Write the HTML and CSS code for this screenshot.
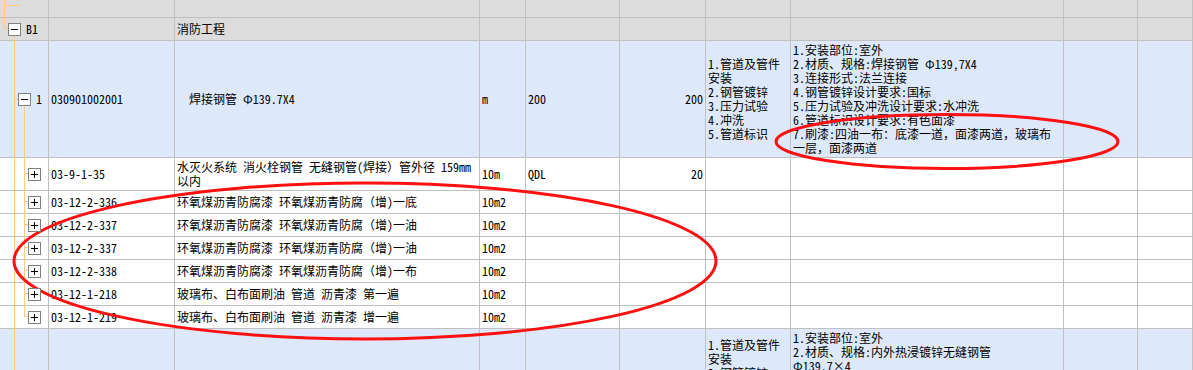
FILE: index.html
```html
<!DOCTYPE html>
<html>

<head lang="zh">
    <meta charset="UTF-8">
    <title>清单</title>
    <link rel="stylesheet" href="styles.css">
</head>

<body>
    <div class="sheet">
        <div class="row row-top">
            <div class="c"></div><div class="c"></div><div class="c"></div><div class="c"></div><div class="c"></div>
            <div class="c"></div><div class="c"></div><div class="c"></div><div class="c"></div><div class="c"></div>
        </div>

        <div class="row row-group">
            <div class="c tree lv0"><span class="tog"><svg width="11" height="11"><path d="M2 5.5h7" /></svg></span><span class="lab">B1</span></div>
            <div class="c"></div>
            <div class="c">消防工程</div>
            <div class="c"></div><div class="c"></div><div class="c"></div><div class="c"></div><div class="c"></div><div class="c"></div><div class="c"></div>
        </div>

        <div class="row row-item">
            <div class="c tree lv1"><span class="tog"><svg width="11" height="11"><path d="M2 5.5h7" /></svg></span><span class="lab">1</span></div>
            <div class="c">030901002001</div>
            <div class="c indent">焊接钢管 Φ139.7X4</div>
            <div class="c">m</div>
            <div class="c">200</div>
            <div class="c num">200</div>
            <div class="c"><p>1.管道及管件安装<br>2.钢管镀锌<br>3.压力试验<br>4.冲洗<br>5.管道标识</p></div>
            <div class="c spec"><p>1.安装部位:室外<br>2.材质、规格:焊接钢管 Φ139,7X4<br>3.连接形式:法兰连接<br>4.钢管镀锌设计要求:国标<br>5.压力试验及冲洗设计要求:水冲洗<br>6.管道标识设计要求:有色面漆<br>7.刷漆:四油一布<span class="fw">：</span>底漆一道<span class="fw">，</span>面漆两道<span class="fw">，</span>玻璃布一层<span class="fw">，</span>面漆两道</p></div>
            <div class="c"></div><div class="c"></div>
        </div>

        <div class="row row-sub">
            <div class="c tree lv2"><span class="tog"><svg width="11" height="11"><path d="M2 5.5h7M5.5 2v7" /></svg></span></div>
            <div class="c">03-9-1-35</div>
            <div class="c"><p>水灭火系统 消火栓钢管 无缝钢管(焊接<span class="fw">）</span>管外径 159mm 以内</p></div>
            <div class="c">10m</div>
            <div class="c">QDL</div>
            <div class="c num">20</div>
            <div class="c"></div><div class="c"></div><div class="c"></div><div class="c"></div>
        </div>
        <div class="row row-sub">
            <div class="c tree lv2"><span class="tog"><svg width="11" height="11"><path d="M2 5.5h7M5.5 2v7" /></svg></span></div>
            <div class="c">03-12-2-336</div>
            <div class="c"><p>环氧煤沥青防腐漆 环氧煤沥青防腐<span class="fw">（</span>增)一底</p></div>
            <div class="c">10m2</div>
            <div class="c"></div><div class="c"></div><div class="c"></div><div class="c"></div><div class="c"></div><div class="c"></div>
        </div>
        <div class="row row-sub">
            <div class="c tree lv2"><span class="tog"><svg width="11" height="11"><path d="M2 5.5h7M5.5 2v7" /></svg></span></div>
            <div class="c">03-12-2-337</div>
            <div class="c"><p>环氧煤沥青防腐漆 环氧煤沥青防腐<span class="fw">（</span>增)一油</p></div>
            <div class="c">10m2</div>
            <div class="c"></div><div class="c"></div><div class="c"></div><div class="c"></div><div class="c"></div><div class="c"></div>
        </div>
        <div class="row row-sub">
            <div class="c tree lv2"><span class="tog"><svg width="11" height="11"><path d="M2 5.5h7M5.5 2v7" /></svg></span></div>
            <div class="c">03-12-2-337</div>
            <div class="c"><p>环氧煤沥青防腐漆 环氧煤沥青防腐<span class="fw">（</span>增)一油</p></div>
            <div class="c">10m2</div>
            <div class="c"></div><div class="c"></div><div class="c"></div><div class="c"></div><div class="c"></div><div class="c"></div>
        </div>
        <div class="row row-sub">
            <div class="c tree lv2"><span class="tog"><svg width="11" height="11"><path d="M2 5.5h7M5.5 2v7" /></svg></span></div>
            <div class="c">03-12-2-338</div>
            <div class="c"><p>环氧煤沥青防腐漆 环氧煤沥青防腐<span class="fw">（</span>增)一布</p></div>
            <div class="c">10m2</div>
            <div class="c"></div><div class="c"></div><div class="c"></div><div class="c"></div><div class="c"></div><div class="c"></div>
        </div>
        <div class="row row-sub">
            <div class="c tree lv2"><span class="tog"><svg width="11" height="11"><path d="M2 5.5h7M5.5 2v7" /></svg></span></div>
            <div class="c">03-12-1-218</div>
            <div class="c">玻璃布、白布面刷油 管道 沥青漆 第一遍</div>
            <div class="c">10m2</div>
            <div class="c"></div><div class="c"></div><div class="c"></div><div class="c"></div><div class="c"></div><div class="c"></div>
        </div>
        <div class="row row-sub">
            <div class="c tree lv2"><span class="tog"><svg width="11" height="11"><path d="M2 5.5h7M5.5 2v7" /></svg></span></div>
            <div class="c">03-12-1-219</div>
            <div class="c">玻璃布、白布面刷油 管道 沥青漆 增一遍</div>
            <div class="c">10m2</div>
            <div class="c"></div><div class="c"></div><div class="c"></div><div class="c"></div><div class="c"></div><div class="c"></div>
        </div>

        <div class="row row-item">
            <div class="c tree lv1"><span class="tog"><svg width="11" height="11"><path d="M2 5.5h7M5.5 2v7" /></svg></span><span class="lab">2</span></div>
            <div class="c">030901002002</div>
            <div class="c indent">镀锌钢管 Φ139.7×4</div>
            <div class="c">m</div>
            <div class="c">120</div>
            <div class="c num">120</div>
            <div class="c"><p>1.管道及管件安装<br>2.钢管镀锌<br>3.压力试验<br>4.冲洗<br>5.管道标识</p></div>
            <div class="c spec"><p>1.安装部位:室外<br>2.材质、规格:内外热浸镀锌无缝钢管<br>Φ139.7<span class="fw">×</span>4<br>3.连接形式:法兰连接<br>4.钢管镀锌设计要求:国标<br>5.压力试验及冲洗设计要求:水冲洗<br>6.管道标识设计要求:有色面漆</p></div>
            <div class="c"></div><div class="c"></div>
        </div>

        <!-- 树形连线 + 红色圈注 -->
        <svg class="marks" width="1193" height="370">
            <g class="tree-lines">
                <path d="M4.5 0V28.5H8M4.5 5.5H20" />
                <path d="M14.5 35V370M14.5 99.5H18" />
                <path d="M24.5 106V316.5" />
                <path d="M24.5 173.5H28M24.5 201.5H28M24.5 224.5H28M24.5 247.5H28M24.5 270.5H28M24.5 293.5H28M24.5 316.5H28" />
            </g>
            <g class="circles">
                <ellipse cx="947" cy="141.5" rx="171" ry="27" />
                <ellipse cx="365" cy="261" rx="351" ry="78" />
            </g>
        </svg>
    </div>
</body>

</html>
```

FILE: styles.css
```css
html,
body {
    margin: 0;
    padding: 0;
}

body {
    width: 1193px;
    height: 370px;
    overflow: hidden;
    background: #ffffff;
    color: #000000;
    font-family: "Noto Sans CJK SC", "Noto Sans", sans-serif;
    font-size: 12px;
    /* 英文数字用半角宽度，接近宋体 */
    font-feature-settings: "hwid";
}

p {
    margin: 0;
}

/* 全角标点不要半角化 */
.fw {
    font-feature-settings: normal;
}

.sheet {
    position: relative;
}

.row {
    display: grid;
    grid-template-columns: 49px 126px 305px 46px 94px 86px 85px 273px 74px 1fr;
}

.c {
    display: flex;
    align-items: center;
    box-sizing: border-box;
    min-height: 23px;
    padding: 2px 2px;
    line-height: 14px;
    border-right: 1px solid #c0c0c0;
    border-bottom: 1px solid #c0c0c0;
}

.row-top .c {
    min-height: 18px;
    padding: 0;
}

.row-top,
.row-group {
    background: #dcdcdc;
}

.row-item {
    background: #dde9fb;
}

.row-sub {
    background: #ffffff;
}

.num {
    justify-content: flex-end;
}

.indent {
    padding-left: 14px;
}

.spec {
    align-items: flex-start;
}

/* 树形列 */
.tree {
    padding: 0;
}

.tree.lv0 {
    padding-left: 8px;
}

.tree.lv1 {
    padding-left: 18px;
}

.tree.lv2 {
    padding-left: 28px;
}

.tog {
    display: block;
    width: 11px;
    height: 11px;
    border: 1px solid #808080;
    background: #ffffff;
    position: relative;
    z-index: 2;
}

.tog svg {
    display: block;
}

.tog path {
    stroke: #000000;
    stroke-width: 1;
    fill: none;
    shape-rendering: crispEdges;
}

.lab {
    margin-left: 5px;
}

.marks {
    position: absolute;
    left: 0;
    top: 0;
    pointer-events: none;
}

.tree-lines path {
    stroke: #ffc97e;
    stroke-width: 1;
    fill: none;
    shape-rendering: crispEdges;
}

.circles ellipse {
    fill: none;
    stroke: #ff1010;
    stroke-width: 3;
}
```
